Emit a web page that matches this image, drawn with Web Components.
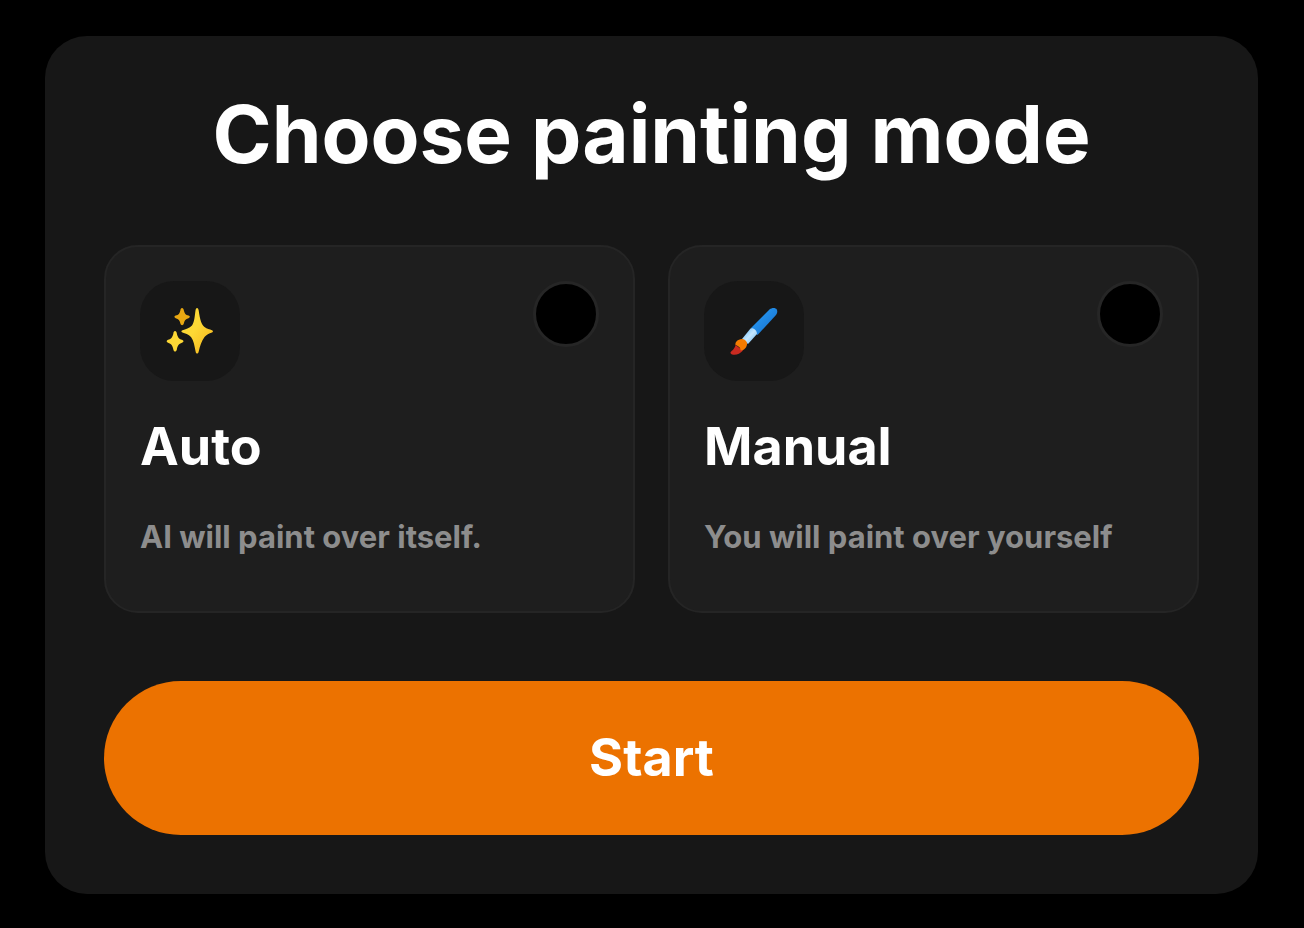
<!DOCTYPE html>
<html lang="en">
<head>
<meta charset="utf-8">
<meta name="viewport" content="width=device-width, initial-scale=1">
<title>Choose painting mode</title>
<style>
body { margin: 0; padding: 36px 46px 34px 45px; background: #000; color: #fff; font-family: Inter, "Open Sans", sans-serif; }
</style>
</head>
<body>
<mode-dialog>
  <span slot="title">Choose painting mode</span>
  <mode-option value="auto">
    <sparkles-icon slot="icon"></sparkles-icon>
    <span slot="name">Auto</span>
    <span slot="description">AI will paint over itself.</span>
  </mode-option>
  <mode-option value="manual">
    <brush-icon slot="icon"></brush-icon>
    <span slot="name">Manual</span>
    <span slot="description">You will paint over yourself</span>
  </mode-option>
  <start-button slot="action">Start</start-button>
</mode-dialog>
<script>
function define(name, html, setup) {
  const template = document.createElement('template');
  template.innerHTML = html;
  customElements.define(name, class extends HTMLElement {
    constructor() {
      super();
      this.attachShadow({ mode: 'open' }).append(template.content.cloneNode(true));
    }
    connectedCallback() { if (setup) setup(this); }
  });
}

define('sparkles-icon', `
  <style>:host { display: block; width: 48px; height: 48px; } svg { display: block; }</style>
  <svg width="48" height="48" viewBox="0 0 48 48" aria-hidden="true">
    <defs><linearGradient id="g" x1="0" y1="0" x2="1" y2="1"><stop offset=".45" stop-color="#fdd835"/><stop offset="1" stop-color="#f4b21a"/></linearGradient></defs>
    <path fill="url(#g)" d="M31 1C32 1 32.400 2 32.700 3.500C34 13 35.500 17.500 38.500 20C41 21.800 43.500 22.300 46 23.200C47.300 23.700 47.300 25 46 25.500C43 26.500 40.500 27.500 38.500 30C35.500 34 34 39 32.700 44.500C32.200 47.300 30 47.300 29.600 44.500C28.500 39 27.800 33.500 25 30C22.500 27 19 26.500 16.500 25.500C15 25 15 23.800 16.500 23.200C19.500 22 23.500 21.500 26 18.500C28.500 15 28.800 8 29.500 3.500C29.700 2 30.200 1 31 1Z"/>
    <path fill="#e9a812" d="M16 1C17.200 1 17.500 2 17.800 3.200C18.500 6.500 19.500 7.800 22.500 8.600C24.300 9.200 24.300 10.600 22.500 11.200C19.500 12 18.500 13.500 17.800 16.500C17.200 18.700 14.900 18.700 14.400 16.500C13.700 13.500 12.700 12 9.700 11.200C8 10.600 8 9.200 9.700 8.600C12.700 7.800 13.700 6.500 14.400 3.200C14.600 2 15 1 16 1Z"/>
    <path fill="#fdd835" d="M9 24C10.200 24 10.500 25 10.800 26.200C11.600 30.200 12.800 31.800 16 32.800C18 33.500 18 35 16 35.700C12.800 36.600 11.600 38.500 10.800 42.800C10.200 45.200 7.900 45.200 7.400 42.800C6.600 38.500 5.300 36.600 2 35.700C.200 35 .200 33.500 2 32.800C5.300 31.800 6.600 30.200 7.400 26.200C7.600 25 8 24 9 24Z"/>
  </svg>`);

define('brush-icon', `
  <style>:host { display: block; width: 48px; height: 48px; } svg { display: block; }</style>
  <svg width="48" height="48" viewBox="0 0 48 48" aria-hidden="true">
    <defs>
      <linearGradient id="h" x1="0" y1="0" x2="1" y2="1"><stop offset=".3" stop-color="#2492ed"/><stop offset=".8" stop-color="#1976d2"/></linearGradient>
      <linearGradient id="f" x1="0" y1="0" x2="1" y2="1"><stop offset=".2" stop-color="#82c7fa"/><stop offset=".5" stop-color="#c4e6ff"/><stop offset=".9" stop-color="#72bdf5"/></linearGradient>
    </defs>
    <path fill="url(#h)" d="M21 21L39.500 2.500C42 .500 45.500 .500 46.800 2.500C47.500 4 47.500 6 46 8L27.500 28Z"/>
    <path fill="url(#f)" d="M20.500 21.500C23.500 20.500 27 23.500 27 27L18 37L12 32Z"/>
    <path fill="#c92a20" d="M5.500 38C4.700 42 2 43.500 .700 45C0 46.300 1 47.200 2.200 47.500C6 48.300 10 47 13 43.500Z"/>
    <path fill="#f57c00" d="M12 32C7.500 32.500 5 35 5.500 38C8 39 10 39.500 10.800 43.500C14 43.500 17.500 40 17 36C16.500 34 14.500 32 12 32Z"/>
  </svg>`);

define('mode-option', `
  <style>
    :host { display: block; min-width: 0; }
    label { display: block; box-sizing: border-box; height: 100%; padding: 34px 34px 54px; border: 2px solid #252525; border-radius: 34px; background: #1e1e1e; cursor: pointer; }
    .top { display: flex; justify-content: space-between; align-items: flex-start; margin-bottom: 36px; }
    .tile { display: grid; place-items: center; width: 100px; height: 100px; border-radius: 34px; background: #171717; }
    input { appearance: none; box-sizing: border-box; width: 66px; height: 66px; margin: 0; border: 3px solid #262626; border-radius: 50%; background: #000; cursor: inherit; }
    input:checked { background: radial-gradient(#ec7200 40%, #000 44%); }
    .name { display: block; margin-bottom: 40px; font-size: 52px; line-height: 60px; font-weight: 700; }
    .description { display: block; color: #8d8d8d; font-size: 31px; line-height: 40px; font-weight: 700; }
  </style>
  <label>
    <span class="top"><span class="tile"><slot name="icon"></slot></span><input type="radio" name="mode"></span>
    <span class="name"><slot name="name"></slot></span>
    <span class="description"><slot name="description"></slot></span>
  </label>`, host => {
    const input = host.shadowRoot.querySelector('input');
    input.value = host.getAttribute('value');
    input.addEventListener('change', () => {
      for (const other of host.parentElement.querySelectorAll('mode-option'))
        if (other !== host) other.shadowRoot.querySelector('input').checked = false;
    });
  });

define('start-button', `
  <style>
    :host { display: block; }
    button { display: block; width: 100%; padding: 46px; border: 0; border-radius: 80px; background: #ec7200; color: #fff; font: inherit; font-size: 52px; line-height: 62px; font-weight: 700; cursor: pointer; }
  </style>
  <button type="button"><slot></slot></button>`);

define('mode-dialog', `
  <style>
    :host { display: block; padding: 59px; border-radius: 42px; background: #171717; }
    h1 { margin: 0 0 72px; text-align: center; font-size: 80px; line-height: 78px; font-weight: 700; }
    .options { display: grid; grid-template-columns: repeat(2, minmax(0, 1fr)); gap: 33px; margin-bottom: 68px; }
  </style>
  <h1><slot name="title"></slot></h1>
  <div class="options" role="radiogroup" aria-label="Painting mode"><slot></slot></div>
  <slot name="action"></slot>`);
</script>
</body>
</html>
